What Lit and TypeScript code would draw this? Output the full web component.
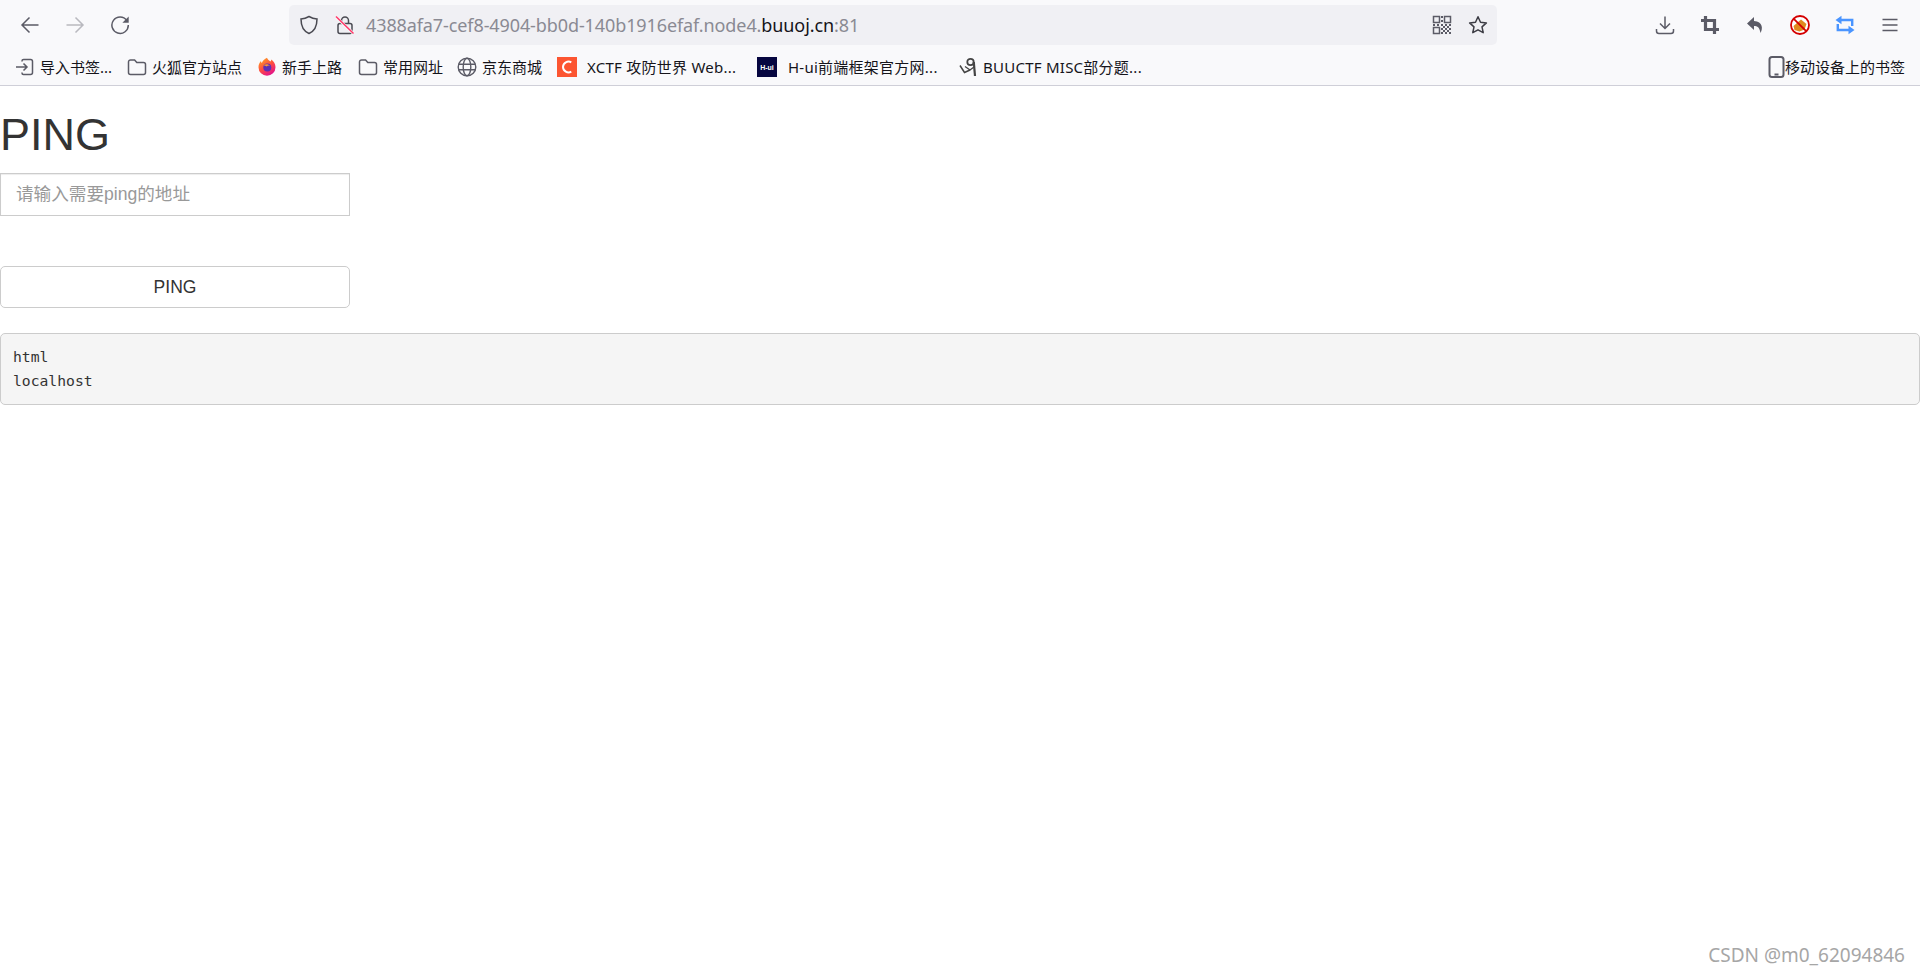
import { LitElement, html, css, svg } from "lit";
import { customElement } from "lit/decorators.js";

const g = "#5b5b66";
const folder = svg`<path d="M1.500 5a2 2 0 0 1 2-2h4.100l2.200 2.500h6.700a2 2 0 0 1 2 2V15.500a2 2 0 0 1-2 2h-13a2 2 0 0 1-2-2z" fill="none" stroke="${g}" stroke-width="1.500"/>`;
const imp = svg`<path d="M7 4.500V4a1.600 1.600 0 0 1 1.600-1.600h7A2 2 0 0 1 17.500 4.400v11.200a2 2 0 0 1-2 2h-7A1.600 1.600 0 0 1 7 16v-.5" fill="none" stroke="${g}" stroke-width="1.500"/><path d="M1 10h11M8.500 6.500 12 10l-3.500 3.500" fill="none" stroke="${g}" stroke-width="1.500"/>`;
const fox = svg`<defs><linearGradient id="fx" x1="0" y1="0" x2="0.6" y2="1"><stop offset="0" stop-color="#ffb320"/><stop offset="0.55" stop-color="#ff4f3e"/><stop offset="1" stop-color="#e31587"/></linearGradient></defs><path d="M10 .8c.6 2 2.200 2.500 3.500 3.700.6-.5.8-1.200.8-1.900 2.400 1.800 4.200 4.400 4.200 7.600a8.500 8.500 0 0 1-17 0c0-2.600 1-4.700 2.500-6.200 0 1 .3 1.700.9 2.100C5.300 3.900 7.700 2 10 .8z" fill="url(#fx)"/><circle cx="10.300" cy="10.500" r="4" fill="#5b2fb5"/><path d="M6.500 8.300c1.800-1.600 5-1.500 6.500.4-1.500-.5-2.700-.2-3.200.8-.9-.7-2-1-3.300-1.200z" fill="#ff9a2e"/>`;
const globe = svg`<g fill="none" stroke="${g}" stroke-width="1.400"><circle cx="10" cy="10" r="8.800"/><ellipse cx="10" cy="10" rx="3.800" ry="8.800"/><path d="M1.600 7.300h16.800M1.600 12.700h16.800"/></g>`;
const csdn = svg`<rect width="20" height="20" fill="#fc5531"/><path d="M14.300 5.300A5.600 5.600 0 0 0 6 10a5.600 5.600 0 0 0 8.300 4.700" fill="none" stroke="#fff" stroke-width="2"/>`;
const hui = svg`<rect width="20" height="20" fill="#060640"/><text x="10" y="13" font-size="7" font-weight="700" fill="#fff" text-anchor="middle" font-family="Liberation Sans">H-ui</text>`;
const buu = svg`<g fill="none" stroke="#444"><circle cx="11.500" cy="5" r="3.200" stroke-width="1.800"/><path d="M1 8.500 5.500 15.500 11 13" stroke-width="1.500"/><path d="M14.800 5 16 19" stroke-width="2.200"/><path d="M6 9.500 11 13 15 10" stroke-width="1.300"/></g>`;

const BOOKMARKS = [
  { icon: imp, text: "导入书签...", left: 15, gap: 5, w: 72, wide: false },
  { icon: folder, text: "火狐官方站点", left: 15, gap: 5, w: 91, wide: false },
  { icon: fox, text: "新手上路", left: 14, gap: 5, w: 60, wide: false },
  { icon: folder, text: "常用网址", left: 16, gap: 5, w: 60, wide: false },
  { icon: globe, text: "京东商城", left: 14, gap: 5, w: 59, wide: false },
  { icon: csdn, text: "XCTF 攻防世界 Web...", left: 16, gap: 10, w: 151, wide: true },
  { icon: hui, text: "H-ui前端框架官方网...", left: 19, gap: 11, w: 149, wide: true },
  { icon: buu, text: "BUUCTF MISC部分题...", left: 22, gap: 4, w: 157, wide: true },
];

@customElement("app-root")
export class AppRoot extends LitElement {
  static styles = css`
    :host { display: block; height: 975px; background: #fff; position: relative; overflow: hidden;
      font-family: "Liberation Sans", "Noto Sans CJK SC", sans-serif; color: #333; }
    .chrome { background: #f9f9fb; border-bottom: 1px solid #cfcfd8; height: 86px; box-sizing: border-box; }
    .nav { display: flex; align-items: center; height: 50px; padding: 0 20px 0 20px; box-sizing: border-box; }
    .icons { display: flex; gap: 25px; align-items: center; }
    .icons svg, .urlbar svg { width: 20px; height: 20px; display: block; flex: none; }
    .urlbar { width: 1208px; height: 40px; margin: 0 auto 0 159px; background: #f0f0f4; border-radius: 5px;
      display: flex; align-items: center; box-sizing: border-box; padding: 0 0 0 10px; }
    .lock { margin-left: 16px; }
    .url { margin-left: 11px; flex: 1; font: 18px/24px "Noto Sans", sans-serif; color: #8a8a93; white-space: nowrap; letter-spacing: -0.1px; }
    .url b { font-weight: 400; color: #15141a; }
    .qr { margin-right: 16px; }
    .star { margin-right: 9px; }
    .marks { display: flex; align-items: center; height: 33px; font: 15px/20px "Noto Sans", "Noto Sans CJK SC", sans-serif; color: #15141a; }
    .mark { display: flex; align-items: center; flex: none; }
    .mark svg { width: 20px; height: 20px; display: block; flex: none; }
    .mark span { white-space: nowrap; flex: none; }
    .mark .wide { letter-spacing: 0.25px; }
    .mobile { margin-left: auto; margin-right: 15px; display: flex; align-items: center; }
    .mobile svg { width: 17px; height: 22px; display: block; }
    .content { display: block; }
    h1 { margin: 24px 0 0; font-size: 45px; font-weight: 400; line-height: 49px; color: #333; }
    .input { display: block; width: 350px; height: 43px; box-sizing: border-box; margin: 14px 0 0; padding: 0 15px;
      border: 1px solid #ccc; font: 17.600px "Liberation Sans", "Noto Sans CJK SC", sans-serif; color: #333; outline: none; background: #fff;
      box-shadow: inset 0 1px 1px rgba(0,0,0,.075); }
    .input::placeholder { color: #999; opacity: 1; }
    button { display: block; width: 350px; height: 42px; margin: 50px 0 0; padding: 0; background: #fff; border: 1px solid #ccc; border-radius: 5px;
      font: 17.500px "Liberation Sans", sans-serif; color: #333; }
    pre { margin: 25px 0 0; height: 72px; box-sizing: border-box; padding: 11px 12px; background: #f5f5f5; border: 1px solid #ccc; border-radius: 5px;
      font: 14.700px/24px "DejaVu Sans Mono", monospace; color: #333; }
    .wm { position: absolute; right: 15px; top: 941px; font: 19px/28px "Noto Sans", sans-serif; color: #a6a6a6; }
  `;

  render() {
    return html`
      <div class="chrome">
        <div class="nav">
          <div class="icons">
            <svg viewBox="0 0 20 20" fill="none" stroke="${g}" stroke-width="1.500"><path d="M18.500 10H2M9.500 2.500 2 10l7.500 7.500"/></svg>
            <svg viewBox="0 0 20 20" fill="none" stroke="#b9b9bf" stroke-width="1.500"><path d="M1.500 10H18M10.500 2.500 18 10l-7.500 7.500"/></svg>
            <svg viewBox="0 0 20 20" fill="none"><path d="M16.800 5.500A8.200 8.200 0 1 0 18.300 10" stroke="${g}" stroke-width="1.500"/><path d="M18.700 1.500v6.300h-6.300z" fill="${g}"/></svg>
          </div>
          <div class="urlbar">
            <svg viewBox="0 0 20 20" fill="none" stroke="#4a4a52" stroke-width="1.500"><path d="M10 1.500c2.500 1.500 5 2.300 8 2.500 0 7-2 12-8 14.500C4 16 2 11 2 4c3-.2 5.500-1 8-2.500z"/></svg>
            <svg class="lock" viewBox="0 0 20 20" fill="none"><path d="M6.500 8.500V5.500a3.500 3.500 0 0 1 7 0v3" stroke="#4a4a52" stroke-width="1.500"/><rect x="3" y="8.500" width="14" height="10" rx="2" stroke="#4a4a52" stroke-width="1.500"/><path d="M1 2 18.500 18.500" stroke="#f9f9fb" stroke-width="3"/><path d="M1 1.500 18.500 18.500" stroke="#ff3a6a" stroke-width="1.600"/></svg>
            <div class="url">4388afa7-cef8-4904-bb0d-140b1916efaf.node4.<b>buuoj.cn</b>:81</div>
            <svg class="qr" viewBox="0 0 20 20"><g fill="none" stroke="${g}" stroke-width="1.500"><rect x="1.500" y="1.500" width="6" height="6"/><rect x="12.500" y="1.500" width="6" height="6"/><rect x="1.500" y="12.500" width="6" height="6"/></g><path d="M9 1h2v2H9zM9 5h2v2H9zM1 9h2v2H1zM5 9h2v2H5zM9 9h2v2H9zM13 9h2v2h-2zM17 9h2v2h-2zM11 11h2v2h-2zM15 11h2v2h-2zM9 13h2v2H9zM13 13h2v2h-2zM17 13h2v2h-2zM11 15h2v2h-2zM15 15h2v2h-2zM9 17h2v2H9zM13 17h2v2h-2zM17 17h2v2h-2z" fill="${g}"/></svg>
            <svg class="star" viewBox="0 0 20 20" fill="none" stroke="#3c3c44" stroke-width="1.500" stroke-linejoin="round"><path d="m10 1.800 2.500 5.400 5.900.7-4.400 4 1.200 5.800-5.200-2.900-5.200 2.900 1.200-5.800-4.400-4 5.900-.7z"/></svg>
          </div>
          <div class="icons">
            <svg viewBox="0 0 20 20" fill="none" stroke="${g}" stroke-width="1.500"><path d="M10 1.500v11.500M5 8.500l5 5 5-5M1.500 14v2a2.500 2.500 0 0 0 2.500 2.500h12a2.500 2.500 0 0 0 2.500-2.500v-2"/></svg>
            <svg viewBox="0 0 20 20" fill="none" stroke="${g}" stroke-width="3.200"><path d="M1 5.500h13.500V19M5.500 1v13.500H19"/></svg>
            <svg viewBox="0 0 20 20"><path d="M9 2 2 8.500 9 15v-4c3.500 0 5.500 1 6.500 7 2.500-4 2.500-11.500-6.500-12z" fill="${g}"/></svg>
            <svg viewBox="0 0 20 20"><circle cx="10" cy="10" r="9" fill="#fff" stroke="#d40000" stroke-width="1.800"/><path d="M3.500 11 11 4.500l5.500 4.500-2 5.500-5 2-5-1.500z" fill="#e08a1e"/><path d="M3.800 3.800 16.200 16.200" stroke="#d40000" stroke-width="1.800"/></svg>
            <svg viewBox="0 0 20 20" fill="none" stroke="#4a95ff" stroke-width="2.400"><path d="M5 5h12.200v6M15 15H2.800V9"/><path d="M.5 5 6.500 .8v8.400zM19.500 15l-6-4.200v8.400z" fill="#4a95ff" stroke="none"/></svg>
            <svg viewBox="0 0 20 20" fill="none" stroke="${g}" stroke-width="1.500"><path d="M2.500 4.500h15M2.500 10h15M2.500 15.500h15"/></svg>
          </div>
        </div>
        <div class="marks">
          ${BOOKMARKS.map(
            (b) => html`<div class="mark" style="margin-left:${b.left}px">
              <svg viewBox="0 0 20 20">${b.icon}</svg>
              <span class=${b.wide ? "wide" : ""} style="margin-left:${b.gap}px;width:${b.w}px">${b.text}</span>
            </div>`
          )}
          <div class="mobile">
            <svg viewBox="0 0 17 22" fill="none"><rect x="1.500" y="1" width="14" height="20" rx="2.500" stroke="${g}" stroke-width="2"/><path d="M6.500 18.500h4" stroke="${g}" stroke-width="2"/></svg>
            <span>移动设备上的书签</span>
          </div>
        </div>
      </div>
      <div class="content">
        <h1>PING</h1>
        <input class="input" placeholder="请输入需要ping的地址" />
        <button>PING</button>
        <pre>html
localhost</pre>
      </div>
      <div class="wm">CSDN @m0_62094846</div>
    `;
  }
}
